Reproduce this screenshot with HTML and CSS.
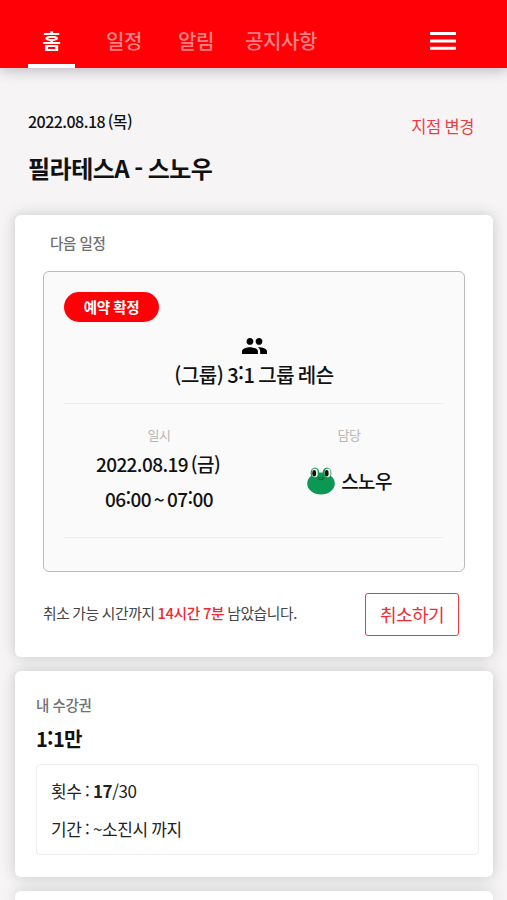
FILE: index.html
```html
<!DOCTYPE html>
<html lang="ko">
<head>
<meta charset="utf-8">
<meta name="viewport" content="width=device-width, initial-scale=1">
<title>필라테스A - 스노우</title>
<link rel="stylesheet" href="styles.css">
</head>
<body>
<header class="topbar">
  <nav class="tabs">
    <a class="tab tab-active">홈</a>
    <a class="tab">일정</a>
    <a class="tab">알림</a>
    <a class="tab">공지사항</a>
  </nav>
  <svg class="menu" viewBox="0 0 26 18"><path d="M0 0h26v3H0zM0 7.4h26v3H0zM0 14.8h26v3H0z" fill="#fff"/></svg>
</header>
<section class="intro">
  <div>
    <p class="today">2022.08.18 (목)</p>
    <h1 class="branch">필라테스A - 스노우</h1>
  </div>
  <a class="change">지점 변경</a>
</section>
<main class="cards">
  <section class="card next">
    <h2 class="label next-label">다음 일정</h2>
    <div class="lesson">
      <span class="badge">예약 확정</span>
      <div class="lesson-head">
        <svg class="people" viewBox="1 5 22 14"><path d="M16 11c1.66 0 2.99-1.34 2.99-3S17.66 5 16 5s-3 1.34-3 3 1.34 3 3 3zm-8 0c1.66 0 2.99-1.34 2.99-3S9.66 5 8 5 5 6.34 5 8s1.34 3 3 3zm0 2c-2.33 0-7 1.17-7 3.5V19h14v-2.500C15 14.170 10.330 13 8 13zm8 0c-.29 0-.62.02-.97.05 1.160.84 1.970 1.970 1.970 3.450V19h6v-2.500c0-2.330-4.670-3.500-7-3.500z"/></svg>
        <h3 class="lesson-name">(그룹) 3<span class="colon">:</span>1 그룹 레슨</h3>
      </div>
      <div class="details">
        <div class="detail">
          <span class="detail-label">일시</span>
          <span class="value">2022.08.19 (금)</span>
          <span class="value">06<span class="colon">:</span>00 ~ 07<span class="colon">:</span>00</span>
        </div>
        <div class="detail">
          <span class="detail-label">담당</span>
          <span class="value teacher">
            <svg class="frog" viewBox="0 0 28 28">
              <g fill="#0c9852"><ellipse cx="8" cy="6.200" rx="4.400" ry="5.800"/><ellipse cx="20" cy="6.200" rx="4.400" ry="5.800"/><ellipse cx="14" cy="16.500" rx="13.800" ry="11"/></g>
              <g fill="#f4f4ee"><ellipse cx="7.800" cy="5.900" rx="3" ry="4.400"/><ellipse cx="20.600" cy="5.900" rx="3" ry="4.400"/></g>
              <g fill="#101010"><ellipse cx="7.200" cy="6.200" rx="1.900" ry="3.300"/><ellipse cx="19.700" cy="6.200" rx="1.900" ry="3.300"/></g>
              <path d="M10.800 11q3.200 3.600 6.400 0M12.800 10v1M15.200 10v1" fill="none" stroke="#06532e" stroke-width="1.100"/>
            </svg>
            스노우
          </span>
        </div>
      </div>
    </div>
    <div class="cancel-row">
      <p class="remaining">취소 가능 시간까지 <strong>14시간 7분</strong> 남았습니다.</p>
      <button class="cancel">취소하기</button>
    </div>
  </section>
  <section class="card pass">
    <h2 class="label">내 수강권</h2>
    <h3 class="pass-name">1<span class="colon">:</span>1만</h3>
    <div class="pass-info">
      <p>횟수 : <b>17</b>/30</p>
      <p>기간 : ~소진시 까지</p>
    </div>
  </section>
  <section class="card more"></section>
</main>
</body>
</html>
```

FILE: styles.css
```css
* { box-sizing: border-box; margin: 0; padding: 0; }

body {
  height: 900px;
  overflow: hidden;
  background: #f6f4f5;
  color: #111;
  font-family: "Noto Sans CJK KR", sans-serif;
  letter-spacing: -0.4px;
  white-space: nowrap;
}

.topbar {
  display: flex;
  justify-content: space-between;
  height: 68px;
  padding: 0 51px 0 28px;
  background: #fe0006;
  box-shadow: 0 3px 12px rgba(70, 60, 80, .3);
}
.tabs { display: flex; gap: 31px; }
.tab {
  height: 68px;
  padding-top: 25px;
  color: #ff8085;
  font-size: 20px;
  font-weight: 500;
  line-height: 31px;
}
.tab:nth-child(3) { margin-left: 5px; }
.tab-active {
  width: 47px;
  border-bottom: 4px solid #fff;
  color: #fff;
  font-weight: 700;
  text-align: center;
}
.menu { width: 26px; height: 18px; margin-top: 32px; }

.intro {
  display: flex;
  justify-content: space-between;
  height: 147px;
  padding: 41px 33px 0 28px;
}
.today { font-size: 16px; font-weight: 500; line-height: 24px; letter-spacing: -0.55px; word-spacing: -1.3px; }
.branch { margin-top: 17px; font-size: 24px; font-weight: 700; line-height: 36px; letter-spacing: -0.5px; word-spacing: -1.200px; }
.change { margin-top: 5px; color: #ee3c42; font-size: 16.5px; font-weight: 400; line-height: 24px; word-spacing: -0.5px; }

.cards { display: flex; flex-direction: column; gap: 14px; padding: 0 14px 0 15px; }
.card { border-radius: 6px; background: #fff; box-shadow: 0 0 14px rgba(40, 50, 50, .22); }
.label { color: #707070; font-size: 14.5px; font-weight: 500; line-height: 22px; }
.colon { position: relative; top: -1.5px; }

.next { height: 442px; padding: 17px 28px 0; }
.next-label { padding-left: 7px; }
.lesson {
  height: 301.500px;
  margin-top: 16.500px;
  padding: 20px 20px 0;
  border: 1.500px solid #bbb;
  border-radius: 6px;
  background: #fafafa;
}
.badge {
  display: block;
  width: 95px;
  height: 30px;
  border-radius: 15px;
  background: #fe0006;
  color: #fff;
  font-size: 14.5px;
  font-weight: 700;
  line-height: 29px;
  text-align: center;
}
.lesson-head {
  display: flex;
  flex-direction: column;
  align-items: center;
  height: 82px;
  padding-top: 16px;
  border-bottom: 1px solid #eee;
}
.people { width: 25px; height: 16px; }
.lesson-name { margin-top: 6px; font-size: 20px; font-weight: 500; line-height: 30px; letter-spacing: -0.5px; word-spacing: -1.3px; }
.details {
  display: grid;
  grid-template-columns: 1fr 1fr;
  height: 134px;
  padding-top: 21px;
  border-bottom: 1px solid #eee;
}
.detail { display: flex; flex-direction: column; align-items: center; }
.detail-label { color: #b5b5b5; font-size: 13px; line-height: 20px; }
.value { font-size: 19px; font-weight: 500; line-height: 35px; letter-spacing: -0.6px; word-spacing: -1.8px; }
.detail-label + .value { margin-top: 1px; padding-right: 2px; }
.detail-label + .teacher { display: flex; align-items: center; gap: 6px; margin-top: 18px; padding: 0 0 0 1px; }
.frog { width: 28px; height: 28px; margin-top: 1px; }

.cancel-row { display: flex; align-items: center; justify-content: space-between; margin-top: 20.500px; padding-right: 6px; }
.remaining { color: #444; font-size: 14.8px; line-height: 22px; word-spacing: -0.8px; padding-bottom: 2px; }
.remaining strong { color: #ee2b34; font-weight: 500; }
.cancel {
  width: 94px;
  height: 43px;
  border: 1.500px solid #ee3c42;
  border-radius: 3px;
  background: #fff;
  color: #ee2b34;
  font: 400 18px/39px "Noto Sans CJK KR", sans-serif;
  letter-spacing: -0.5px;
}

.pass { height: 206px; padding: 23px 14px 0 21px; }
.pass-name { margin-top: 8px; font-size: 20px; font-weight: 700; line-height: 30px; letter-spacing: -0.7px; }
.pass-info {
  height: 91px;
  margin-top: 10px;
  padding: 7px 14px;
  border: 1.500px solid #eee;
  border-radius: 4px;
  color: #222;
  font-size: 17px;
  line-height: 37.500px;
  word-spacing: -0.8px;
}
.more { height: 9px; border-radius: 6px 6px 0 0; }
```
